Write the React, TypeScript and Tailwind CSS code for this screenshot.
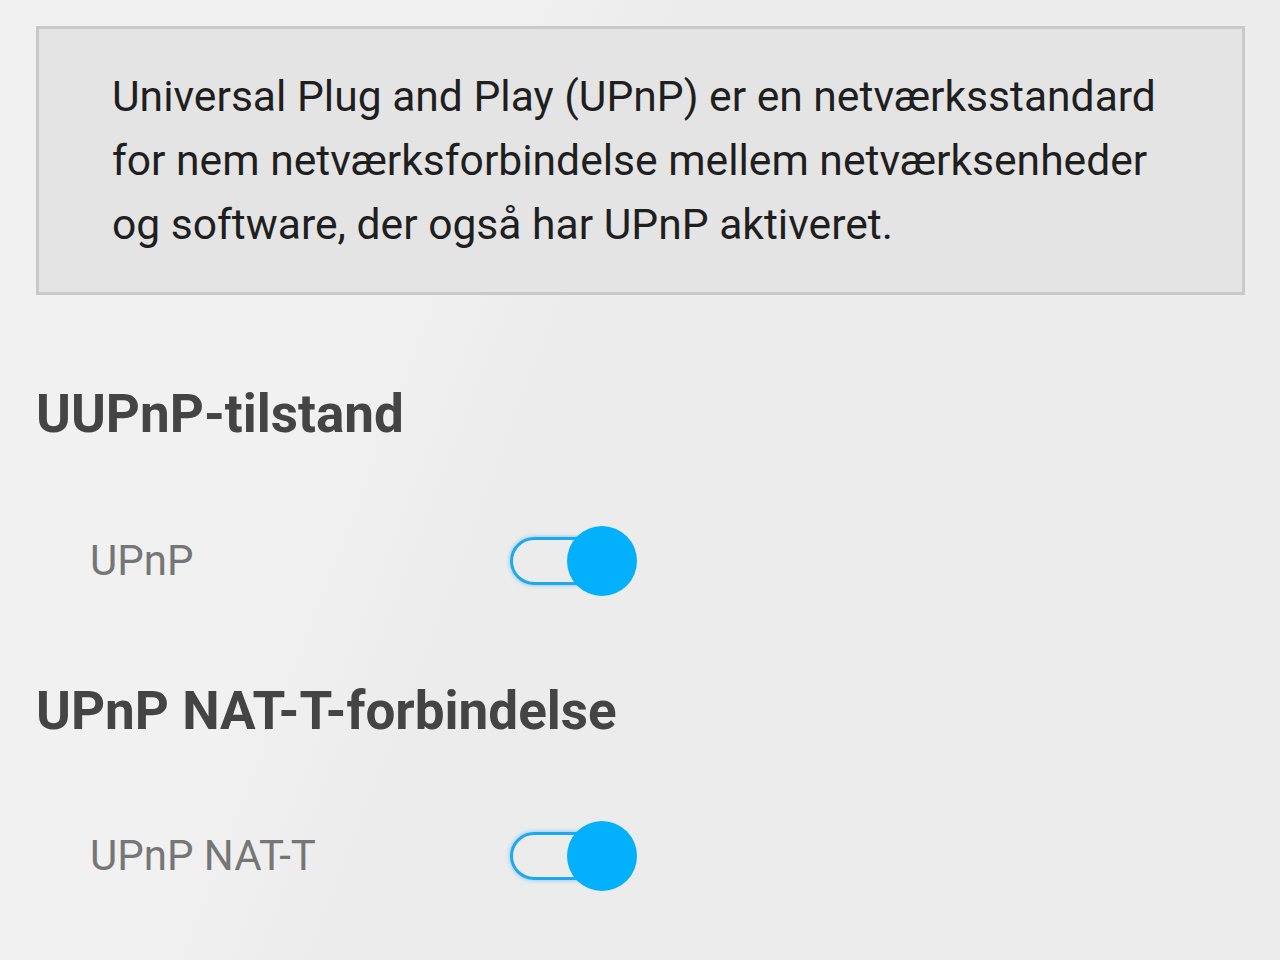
import React from 'react'

function Toggle() {
  return (
    <div className="relative w-[130px] h-[70px] flex items-center">
      <div className="ml-[2px] w-[110px] h-[48px] rounded-full border-[3px] border-[#1ea9ec] shadow-[0_0_4px_rgba(30,169,236,0.6)]" />
      <div className="absolute left-[59px] top-0 w-[70px] h-[70px] rounded-full bg-[#02b0fc]" />
    </div>
  )
}

function Row({ label }: { label: string }) {
  return (
    <div className="flex items-center pl-[54px]">
      <span className="w-[418px] text-[42px] leading-none text-[#767676]">{label}</span>
      <Toggle />
    </div>
  )
}

export default function App() {
  return (
    <div
      className="w-[1280px] h-[960px] overflow-hidden bg-[linear-gradient(111deg,#f1f1f1_0%,#f1f1f1_30%,#ececec_42%,#ececec_100%)] pt-[26px] pl-[36px] pr-[35px]"
      style={{ fontFamily: 'Roboto, "Noto Sans", sans-serif' }}
    >
      <div className="border-[3px] border-[#c9c9c9] bg-[#e4e4e4] h-[269px] pl-[73px] pt-[35px]">
        <p className="text-[42.6px] leading-[64px] text-[#1f1f1f]">
          Universal Plug and Play (UPnP) er en netværksstandard
          <br />
          for nem netværksforbindelse mellem netværksenheder
          <br />
          og software, der også har UPnP aktiveret.
        </p>
      </div>

      <h2 className="mt-[93px] text-[53px] leading-none font-bold text-[#444444]">UUPnP-tilstand</h2>
      <div className="mt-[85px]">
        <Row label="UPnP" />
      </div>

      <h2 className="mt-[89px] text-[53px] leading-none font-bold text-[#444444]">UPnP NAT-T-forbindelse</h2>
      <div className="mt-[83px]">
        <Row label="UPnP NAT-T" />
      </div>
    </div>
  )
}
